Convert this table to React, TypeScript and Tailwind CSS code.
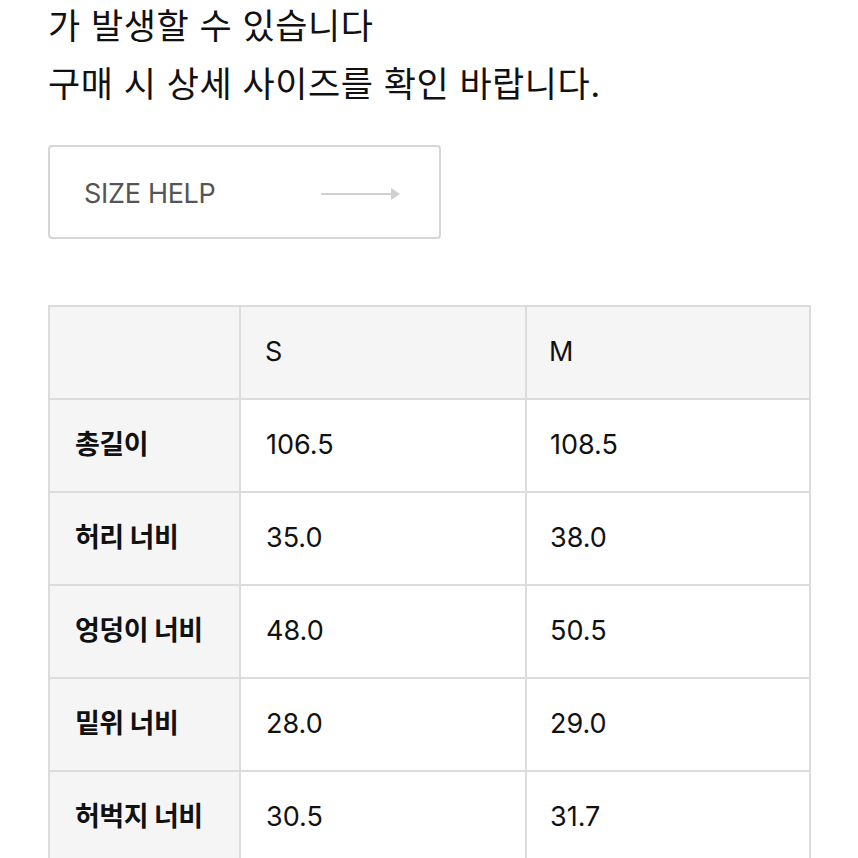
const rows = [
  { label: '총길이', s: '106.5', m: '108.5' },
  { label: '허리 너비', s: '35.0', m: '38.0' },
  { label: '엉덩이 너비', s: '48.0', m: '50.5' },
  { label: '밑위 너비', s: '28.0', m: '29.0' },
  { label: '허벅지 너비', s: '30.5', m: '31.7' },
];

export default function App() {
  return (
    <div className="w-[858px] h-[858px] overflow-hidden bg-white text-[#111] font-['Inter','Noto_Sans_CJK_KR',sans-serif]">
      <div className="pl-[48px] -mt-[3px] text-[35px] leading-[58px] tracking-[0.5px]">
        <p>가 발생할 수 있습니다</p>
        <p>구매 시 상세 사이즈를 확인 바랍니다.</p>
      </div>

      <button className="ml-[48px] mt-[32px] w-[393px] h-[94px] border-2 border-[#d6d6d6] rounded-[4px] flex items-center justify-between pl-[34px] pr-[38px] pt-[4px]">
        <span className="text-[27px] text-[#555] tracking-[-0.3px]">SIZE HELP</span>
        <svg width="80" height="14" viewBox="0 0 80 14">
          <line x1="0" y1="7" x2="72" y2="7" stroke="#d0d0d0" strokeWidth="2" />
          <path d="M70 1 L79 7 L70 13 Z" fill="#d0d0d0" />
        </svg>
      </button>

      <table className="ml-[48px] mt-[66px] border-collapse w-[761px] table-fixed text-[27px]">
        <colgroup>
          <col className="w-[191px]" />
          <col className="w-[286px]" />
          <col className="w-[284px]" />
        </colgroup>
        <thead>
          <tr className="h-[93px] bg-[#f5f5f5]">
            <th className="border-2 border-[#dcdcdc]" />
            <th className="border-2 border-[#dcdcdc] text-left font-normal pl-[24px]">S</th>
            <th className="border-2 border-[#dcdcdc] text-left font-normal pl-[22px]">M</th>
          </tr>
        </thead>
        <tbody>
          {rows.map((r) => (
            <tr key={r.label} className="h-[93px]">
              <td className="border-2 border-[#dcdcdc] bg-[#f5f5f5] pl-[25px] font-bold tracking-[-0.5px]">{r.label}</td>
              <td className="border-2 border-[#dcdcdc] pl-[25px]">{r.s}</td>
              <td className="border-2 border-[#dcdcdc] pl-[23px]">{r.m}</td>
            </tr>
          ))}
        </tbody>
      </table>
    </div>
  );
}
